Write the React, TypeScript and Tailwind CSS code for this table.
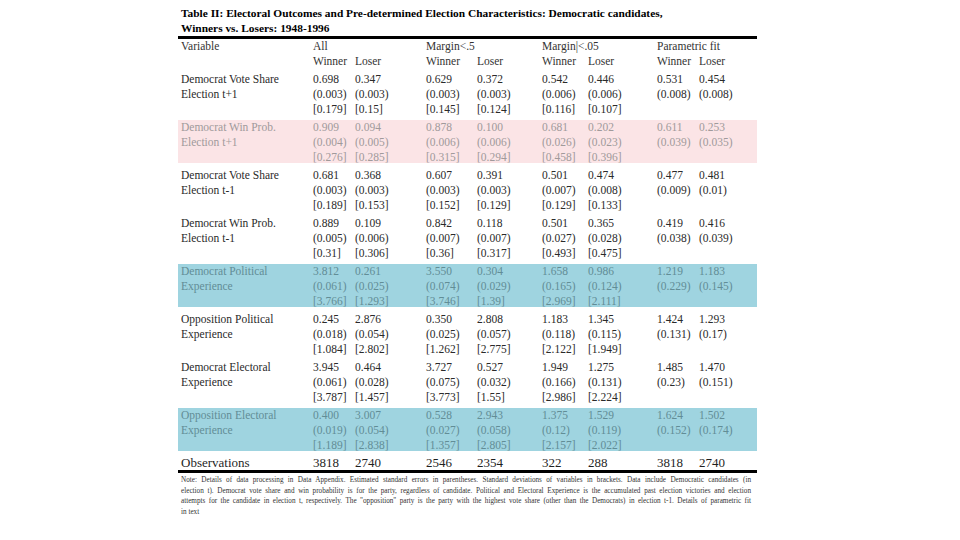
import React from 'react';

type Band = 'none' | 'pink' | 'blue';

interface RowData {
  label: [string, string];
  est: string[];
  se: string[];
  sd: string[];
  band: Band;
}

const grid = 'grid grid-cols-[132px_42px_71px_51px_65px_46px_69px_42px_1fr] pl-[3px]';

const rows: RowData[] = [
  {
    label: ['Democrat Vote Share', 'Election t+1'],
    est: ['0.698', '0.347', '0.629', '0.372', '0.542', '0.446', '0.531', '0.454'],
    se: ['(0.003)', '(0.003)', '(0.003)', '(0.003)', '(0.006)', '(0.006)', '(0.008)', '(0.008)'],
    sd: ['[0.179]', '[0.15]', '[0.145]', '[0.124]', '[0.116]', '[0.107]'],
    band: 'none',
  },
  {
    label: ['Democrat Win Prob.', 'Election t+1'],
    est: ['0.909', '0.094', '0.878', '0.100', '0.681', '0.202', '0.611', '0.253'],
    se: ['(0.004)', '(0.005)', '(0.006)', '(0.006)', '(0.026)', '(0.023)', '(0.039)', '(0.035)'],
    sd: ['[0.276]', '[0.285]', '[0.315]', '[0.294]', '[0.458]', '[0.396]'],
    band: 'pink',
  },
  {
    label: ['Democrat Vote Share', 'Election t-1'],
    est: ['0.681', '0.368', '0.607', '0.391', '0.501', '0.474', '0.477', '0.481'],
    se: ['(0.003)', '(0.003)', '(0.003)', '(0.003)', '(0.007)', '(0.008)', '(0.009)', '(0.01)'],
    sd: ['[0.189]', '[0.153]', '[0.152]', '[0.129]', '[0.129]', '[0.133]'],
    band: 'none',
  },
  {
    label: ['Democrat Win Prob.', 'Election t-1'],
    est: ['0.889', '0.109', '0.842', '0.118', '0.501', '0.365', '0.419', '0.416'],
    se: ['(0.005)', '(0.006)', '(0.007)', '(0.007)', '(0.027)', '(0.028)', '(0.038)', '(0.039)'],
    sd: ['[0.31]', '[0.306]', '[0.36]', '[0.317]', '[0.493]', '[0.475]'],
    band: 'none',
  },
  {
    label: ['Democrat Political', 'Experience'],
    est: ['3.812', '0.261', '3.550', '0.304', '1.658', '0.986', '1.219', '1.183'],
    se: ['(0.061)', '(0.025)', '(0.074)', '(0.029)', '(0.165)', '(0.124)', '(0.229)', '(0.145)'],
    sd: ['[3.766]', '[1.293]', '[3.746]', '[1.39]', '[2.969]', '[2.111]'],
    band: 'blue',
  },
  {
    label: ['Opposition Political', 'Experience'],
    est: ['0.245', '2.876', '0.350', '2.808', '1.183', '1.345', '1.424', '1.293'],
    se: ['(0.018)', '(0.054)', '(0.025)', '(0.057)', '(0.118)', '(0.115)', '(0.131)', '(0.17)'],
    sd: ['[1.084]', '[2.802]', '[1.262]', '[2.775]', '[2.122]', '[1.949]'],
    band: 'none',
  },
  {
    label: ['Democrat Electoral', 'Experience'],
    est: ['3.945', '0.464', '3.727', '0.527', '1.949', '1.275', '1.485', '1.470'],
    se: ['(0.061)', '(0.028)', '(0.075)', '(0.032)', '(0.166)', '(0.131)', '(0.23)', '(0.151)'],
    sd: ['[3.787]', '[1.457]', '[3.773]', '[1.55]', '[2.986]', '[2.224]'],
    band: 'none',
  },
  {
    label: ['Opposition Electoral', 'Experience'],
    est: ['0.400', '3.007', '0.528', '2.943', '1.375', '1.529', '1.624', '1.502'],
    se: ['(0.019)', '(0.054)', '(0.027)', '(0.058)', '(0.12)', '(0.119)', '(0.152)', '(0.174)'],
    sd: ['[1.189]', '[2.838]', '[1.357]', '[2.805]', '[2.157]', '[2.022]'],
    band: 'blue',
  },
];

const observations = ['3818', '2740', '2546', '2354', '322', '288', '3818', '2740'];

const bandClass = (band: Band) =>
  band === 'pink'
    ? 'bg-[#fbe4e6] text-[#a09a9b]'
    : band === 'blue'
      ? 'bg-[#9fd4e0] text-[#628d96]'
      : 'text-[#2a2a2a]';

const StatRow = ({ row }: { row: RowData }) => (
  <div className="h-[48px]">
    <div className={`h-[43px] ${grid} ${bandClass(row.band)}`}>
      <div>
        <div>{row.label[0]}</div>
        <div>{row.label[1]}</div>
      </div>
      {row.est.map((v, i) => (
        <div key={i}>
          <div>{v}</div>
          <div>{row.se[i]}</div>
          {row.sd[i] && <div>{row.sd[i]}</div>}
        </div>
      ))}
      <div />
    </div>
  </div>
);

export default function App() {
  return (
    <div className="w-[960px] h-[540px] bg-white overflow-hidden font-['Liberation_Serif','Times_New_Roman',serif]">
      <div className="ml-[178px] w-[579px] pt-[6px]">
        <div className="pl-[3px] text-[11.4px] font-bold leading-[15px] text-black">
          <div>Table II: Electoral Outcomes and Pre-determined Election Characteristics: Democratic candidates,</div>
          <div>Winners vs. Losers: 1948-1996</div>
        </div>
        <div className="h-[3px] bg-black" />

        <div className={`${grid} text-[11.5px] leading-[15px] text-[#333]`}>
          <div>Variable</div>
          <div className="col-span-2">All</div>
          <div className="col-span-2">Margin&lt;.5</div>
          <div className="col-span-2">Margin|&lt;.05</div>
          <div className="col-span-2">Parametric fit</div>
          <div />
          <div>Winner</div>
          <div>Loser</div>
          <div>Winner</div>
          <div>Loser</div>
          <div>Winner</div>
          <div>Loser</div>
          <div>Winner</div>
          <div>Loser</div>
          <div />
        </div>

        <div className="mt-[3px] text-[11.5px] leading-[15px]">
          {rows.map((r, i) => (
            <StatRow key={i} row={r} />
          ))}
        </div>

        <div className={`${grid} h-[14px] items-center text-[13px] leading-[14px] text-[#1f1f1f]`}>
          <div>Observations</div>
          {observations.map((o, i) => (
            <div key={i}>{o}</div>
          ))}
          <div />
        </div>
        <div className="h-[3px] bg-black" />

        <div className="pl-[3px] pr-[6px] pt-[2px] text-[7.2px] leading-[10.5px] text-[#333]">
          <div className="whitespace-nowrap text-justify [text-align-last:justify]">
            Note: Details of data processing in Data Appendix. Estimated standard errors in parentheses. Standard deviations of variables in brackets. Data include Democratic candidates (in
          </div>
          <div className="whitespace-nowrap text-justify [text-align-last:justify]">
            election t). Democrat vote share and win probability is for the party, regardless of candidate. Political and Electoral Experience is the accumulated past election victories and election
          </div>
          <div className="whitespace-nowrap text-justify [text-align-last:justify]">
            attempts for the candidate in election t, respectively. The "opposition" party is the party with the highest vote share (other than the Democrats) in election t-1. Details of parametric fit
          </div>
          <div>in text</div>
        </div>
      </div>
    </div>
  );
}
